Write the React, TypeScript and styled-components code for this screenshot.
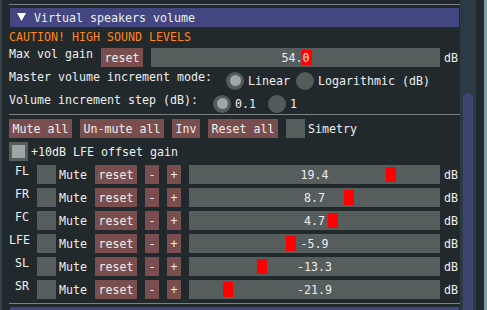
import React from 'react';
import styled, { createGlobalStyle } from 'styled-components';

const FONT = `"DejaVu Sans Mono", "Liberation Mono", monospace`;

const GlobalStyle = createGlobalStyle`
  html, body { margin: 0; padding: 0; background: #22292c; overflow: hidden; }
  body { font-family: ${FONT}; font-size: 11.63px; color: #eeeeee; }
  * { box-sizing: border-box; }
`;

const Window = styled.div`
  display: flex;
  width: 487px;
  height: 310px;
  overflow: hidden;
  background: #22292c;
`;

const LeftEdge = styled.div`
  width: 2px;
  flex: none;
  background: #33424a;
`;

const Panel = styled.div`
  width: 458px;
  flex: none;
  padding: 4px 0 0 7px;
  display: flex;
  flex-direction: column;
  overflow: hidden;
`;

const ScrollTrack = styled.div`
  width: 16px;
  flex: none;
  background: #2c3a43;
  padding: 93px 3px 0 3px;
  display: flex;
`;

const ScrollThumb = styled.div`
  flex: 1;
  background: #3d4472;
  border-radius: 5px 5px 0 0;
`;

const Gutter = styled.div`
  width: 8px;
  flex: none;
`;

const RightEdge = styled.div`
  width: 3px;
  flex: none;
  background: #7b9ea6;
`;

const Separator = styled.div<{ $mt: number }>`
  flex: none;
  height: 1px;
  background: #788080;
  margin-top: ${(p) => p.$mt}px;
`;

const Header = styled.div<{ $mt: number }>`
  flex: none;
  height: 19px;
  margin: ${(p) => p.$mt}px 1px 0 1px;
  background: #434681;
  display: flex;
  align-items: flex-start;
  padding-left: 7px;
  gap: 8px;
`;

const Arrow = styled.svg`
  flex: none;
  margin-top: 5px;
`;

const Row = styled.div<{ $mt?: number; $gap?: number }>`
  flex: none;
  display: flex;
  align-items: flex-start;
  height: 19px;
  margin-top: ${(p) => p.$mt ?? 4}px;
  gap: ${(p) => p.$gap ?? 8}px;
`;

const Label = styled.div<{ $color?: string; $mt?: number }>`
  flex: none;
  line-height: 13px;
  height: 13px;
  white-space: pre;
  color: ${(p) => p.$color ?? '#eeeeee'};
  margin-top: ${(p) => p.$mt ?? 0}px;
`;

const ChannelName = styled.div`
  flex: none;
  width: 20px;
  text-align: right;
  line-height: 13px;
  white-space: pre;
`;

const FrameText = styled.span`
  flex: none;
  height: 19px;
  line-height: 19px;
  padding-top: 1px;
  white-space: pre;
`;

const Button = styled.button`
  flex: none;
  height: 19px;
  margin: 0;
  border: 0;
  padding: 1px 3.5px 0;
  line-height: 19px;
  font: inherit;
  color: inherit;
  background: #7a4e4e;
  white-space: pre;
  overflow: visible;
`;

const CheckItem = styled.div`
  flex: none;
  display: flex;
  align-items: flex-start;
  gap: 3px;
`;

const CheckBox = styled.div<{ $checked?: boolean }>`
  flex: none;
  width: 19px;
  height: 19px;
  background: #555d5d;
  display: flex;
  align-items: center;
  justify-content: center;
  &::after {
    content: '';
    display: ${(p) => (p.$checked ? 'block' : 'none')};
    width: 13px;
    height: 13px;
    background: #a0a5a5;
  }
`;

const RadioGroup = styled.div<{ $gap: number }>`
  flex: none;
  display: flex;
  gap: ${(p) => p.$gap}px;
`;

const RadioItem = styled.div`
  flex: none;
  display: flex;
  align-items: flex-start;
  gap: 3px;
`;

const RadioCircle = styled.div<{ $on?: boolean }>`
  flex: none;
  width: 18px;
  height: 18px;
  margin: 0.5px;
  border-radius: 50%;
  background: #535b5b;
  display: flex;
  align-items: center;
  justify-content: center;
  &::after {
    content: '';
    display: ${(p) => (p.$on ? 'block' : 'none')};
    width: 11px;
    height: 11px;
    border-radius: 50%;
    background: #a0a5a5;
  }
`;

const SliderGroup = styled.div`
  flex: 1;
  display: flex;
  align-items: flex-start;
  gap: 4px;
  padding-right: 2px;
`;

const SliderFrame = styled.div`
  position: relative;
  flex: 1;
  height: 19px;
  background: #555d5d;
  display: flex;
  justify-content: center;
`;

const Grab = styled.div`
  position: absolute;
  top: 2px;
  width: 10px;
  height: 15px;
  background: #ff0000;
`;

const SliderValue = styled.span`
  position: relative;
  height: 19px;
  line-height: 19px;
  padding-top: 1px;
  white-space: pre;
`;

function Slider({ value, min, max, text }: { value: number; min: number; max: number; text: string }) {
  const f = (value - min) / (max - min);
  return (
    <SliderGroup>
      <SliderFrame>
        <Grab style={{ left: `calc(2px + (100% - 14px) * ${f})` }} />
        <SliderValue>{text}</SliderValue>
      </SliderFrame>
      <FrameText>dB</FrameText>
    </SliderGroup>
  );
}

function Radio({ label, on }: { label: string; on?: boolean }) {
  return (
    <RadioItem>
      <RadioCircle $on={on} />
      <FrameText>{label}</FrameText>
    </RadioItem>
  );
}

const channels: { name: string; value: number }[] = [
  { name: 'FL', value: 19.4 },
  { name: 'FR', value: 8.7 },
  { name: 'FC', value: 4.7 },
  { name: 'LFE', value: -5.9 },
  { name: 'SL', value: -13.3 },
  { name: 'SR', value: -21.9 },
];

export default function App() {
  return (
    <>
      <GlobalStyle />
      <Window>
        <LeftEdge />
        <Panel>
          <Separator $mt={0} />
          <Header $mt={3}>
            <Arrow width="9" height="8" viewBox="0 0 9 8">
              <polygon points="0,0 9,0 4.5,8" fill="#ffffff" />
            </Arrow>
            <FrameText>Virtual speakers volume</FrameText>
          </Header>
          <Label $color="#ff851a" $mt={4}>CAUTION! HIGH SOUND LEVELS</Label>
          <Row>
            <Label>Max vol gain</Label>
            <Button>reset</Button>
            <Slider value={54} min={0} max={100} text="54.0" />
          </Row>
          <Row $gap={14}>
            <Label>Master volume increment mode:</Label>
            <RadioGroup $gap={6}>
              <Radio label="Linear" on />
              <Radio label="Logarithmic (dB)" />
            </RadioGroup>
          </Row>
          <Row $gap={15}>
            <Label>Volume increment step (dB):</Label>
            <RadioGroup $gap={12}>
              <Radio label="0.1" on />
              <Radio label="1" />
            </RadioGroup>
          </Row>
          <Separator $mt={1} />
          <Row>
            <Button>Mute all</Button>
            <Button>Un-mute all</Button>
            <Button>Inv</Button>
            <Button>Reset all</Button>
            <CheckItem>
              <CheckBox />
              <FrameText>Simetry</FrameText>
            </CheckItem>
          </Row>
          <Row>
            <CheckItem>
              <CheckBox $checked />
              <FrameText>+10dB LFE offset gain</FrameText>
            </CheckItem>
          </Row>
          {channels.map((c) => (
            <Row key={c.name}>
              <ChannelName>{c.name}</ChannelName>
              <CheckItem>
                <CheckBox />
                <FrameText>Mute</FrameText>
              </CheckItem>
              <Button>reset</Button>
              <Button>-</Button>
              <Button>+</Button>
              <Slider value={c.value} min={-30} max={30} text={c.value.toFixed(1)} />
            </Row>
          ))}
          <Separator $mt={4} />
          <Header $mt={3} />
        </Panel>
        <ScrollTrack>
          <ScrollThumb />
        </ScrollTrack>
        <Gutter />
        <RightEdge />
      </Window>
    </>
  );
}
